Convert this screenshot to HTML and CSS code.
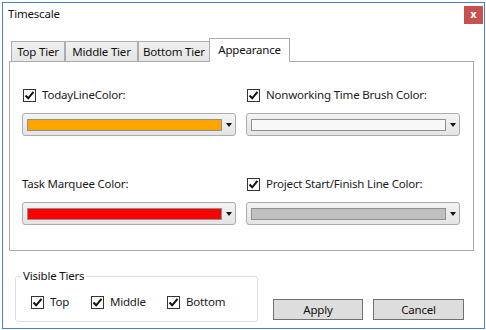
FILE: index.html
```html
<!DOCTYPE html>
<html>
<head>
<meta charset="utf-8">
<link rel="stylesheet" href="styles.css">
</head>
<body>
<div class="window">
  <div class="titlebar">
    <span class="title">Timescale</span>
    <div class="close">x</div>
  </div>
  <div class="tabs">
    <div class="tab t1">Top Tier</div>
    <div class="tab t2">Middle Tier</div>
    <div class="tab t3">Bottom Tier</div>
    <div class="tab t4 selected">Appearance</div>
  </div>
  <div class="panel">
    <div class="field">
      <div class="label-row">
        <span class="check"><svg width="11" height="11" viewBox="0 0 11 11"><path d="M1.5 5.5 L4.2 8.3 L9.5 1.8" fill="none" stroke="#111" stroke-width="2"/></svg></span>
        <span>TodayLineColor:</span>
      </div>
      <div class="combo"><div class="swatch orange"></div><div class="arrow"></div></div>
    </div>
    <div class="field right">
      <div class="label-row">
        <span class="check"><svg width="11" height="11" viewBox="0 0 11 11"><path d="M1.5 5.5 L4.2 8.3 L9.5 1.8" fill="none" stroke="#111" stroke-width="2"/></svg></span>
        <span>Nonworking Time Brush Color:</span>
      </div>
      <div class="combo"><div class="swatch white"></div><div class="arrow"></div></div>
    </div>
    <div class="field">
      <div class="label-row plain">
        <span>Task Marquee Color:</span>
      </div>
      <div class="combo"><div class="swatch red"></div><div class="arrow"></div></div>
    </div>
    <div class="field right">
      <div class="label-row">
        <span class="check"><svg width="11" height="11" viewBox="0 0 11 11"><path d="M1.5 5.5 L4.2 8.3 L9.5 1.8" fill="none" stroke="#111" stroke-width="2"/></svg></span>
        <span>Project Start/Finish Line Color:</span>
      </div>
      <div class="combo"><div class="swatch silver"></div><div class="arrow"></div></div>
    </div>
  </div>
  <div class="footer">
    <fieldset class="group">
      <legend>Visible Tiers</legend>
      <div class="tiers">
        <div class="tier w1"><span class="check"><svg width="11" height="11" viewBox="0 0 11 11"><path d="M1.5 5.5 L4.2 8.3 L9.5 1.8" fill="none" stroke="#111" stroke-width="2"/></svg></span><span>Top</span></div>
        <div class="tier w2"><span class="check"><svg width="11" height="11" viewBox="0 0 11 11"><path d="M1.5 5.5 L4.2 8.3 L9.5 1.8" fill="none" stroke="#111" stroke-width="2"/></svg></span><span>Middle</span></div>
        <div class="tier"><span class="check"><svg width="11" height="11" viewBox="0 0 11 11"><path d="M1.5 5.5 L4.2 8.3 L9.5 1.8" fill="none" stroke="#111" stroke-width="2"/></svg></span><span>Bottom</span></div>
      </div>
    </fieldset>
    <div class="buttons">
      <div class="btn apply">Apply</div>
      <div class="btn cancel">Cancel</div>
    </div>
  </div>
</div>
</body>
</html>
```
FILE: styles.css
```css
* { box-sizing: border-box; }
html, body { margin: 0; padding: 0; background: #ffffff; }
body {
  font-family: "Noto Sans", "Open Sans", sans-serif;
  font-size: 11.5px;
  letter-spacing: -0.2px;
  color: #1a1a1a;
}
.window {
  margin: 2px;
  width: 483px;
  height: 327px;
  border: 1px solid #4a7fd4;
  background: #ffffff;
}
.titlebar {
  height: 35px;
  display: flex;
  justify-content: space-between;
  align-items: flex-start;
}
.title {
  padding: 3px 0 0 5px;
  line-height: 16px;
  color: #111;
}
.close {
  margin: 3px 1px 0 0;
  width: 19px;
  height: 18px;
  background: #c75050;
  color: #ffffff;
  font-family: "DejaVu Sans", sans-serif;
  font-weight: bold;
  font-size: 10px;
  letter-spacing: 0;
  line-height: 17px;
  text-align: center;
}
.tabs {
  display: flex;
  align-items: flex-end;
  padding-left: 8px;
  height: 23px;
}
.tab {
  height: 20px;
  border: 1px solid #acacac;
  border-bottom: none;
  background: linear-gradient(#f0f0f0, #e5e5e5);
  text-align: center;
  line-height: 19px;
  color: #111;
  white-space: nowrap;
}
.t1 { width: 54px; }
.t2 { width: 73px; }
.t3 { width: 72px; }
.t4 { width: 81px; }
.tab.selected {
  height: 24px;
  margin-left: -1px;
  margin-bottom: -1px;
  background: #ffffff;
  position: relative;
  z-index: 1;
  line-height: 21px;
}
.panel {
  margin-left: 6px;
  width: 465px;
  height: 190px;
  border: 1px solid #acacac;
  display: grid;
  grid-template-columns: 214px 214px;
  column-gap: 10px;
  row-gap: 40px;
  align-content: start;
  padding: 25px 0 0 12px;
}
.field {
  display: flex;
  flex-direction: column;
  gap: 10px;
}
.label-row {
  height: 16px;
  display: flex;
  align-items: center;
  gap: 6px;
  line-height: 16px;
  padding-left: 1px;
}
.label-row.plain { padding-left: 0; }
.check {
  width: 13px;
  height: 13px;
  border: 1px solid #333333;
  background: #ffffff;
  display: flex;
  align-items: center;
  justify-content: center;
  flex: none;
}
.check svg { display: block; }
.combo {
  height: 23px;
  border: 1px solid #acacac;
  border-radius: 3px;
  background: linear-gradient(#f3f3f3, #e4e4e4);
  display: flex;
  align-items: center;
  padding: 0 3px 0 4px;
}
.swatch {
  flex: 1;
  height: 12px;
  border: 1px solid #8f8f8f;
  margin-right: 4px;
}
.orange { background: #ffa500; }
.red { background: #ff0000; }
.white { background: #f8f8f8; }
.silver { background: #c0c0c0; }
.arrow {
  width: 0;
  height: 0;
  border-left: 3.5px solid transparent;
  border-right: 3.5px solid transparent;
  border-top: 4px solid #111;
  flex: none;
}
.footer {
  display: flex;
  align-items: flex-start;
  padding-left: 12px;
}
.group {
  margin: 17px 0 0 0;
  width: 243px;
  border: 1px solid #d5dfe5;
  border-radius: 3px;
  padding: 10px 0 11px 5px;
}
.group legend {
  padding: 0 2px;
  line-height: 16px;
  color: #111;
}
.tiers {
  display: flex;
  margin-left: 10px;
  height: 16px;
}
.tier {
  display: flex;
  align-items: center;
  gap: 6px;
  line-height: 16px;
}
.w1 { width: 60px; }
.w2 { width: 76px; }
.buttons {
  display: flex;
  gap: 10px;
  margin: 48px 0 0 15px;
}
.btn {
  height: 21px;
  border: 1px solid #707070;
  background: #dddddd;
  text-align: center;
  line-height: 19px;
  color: #111;
}
.apply { width: 90px; }
.cancel { width: 91px; }
```
